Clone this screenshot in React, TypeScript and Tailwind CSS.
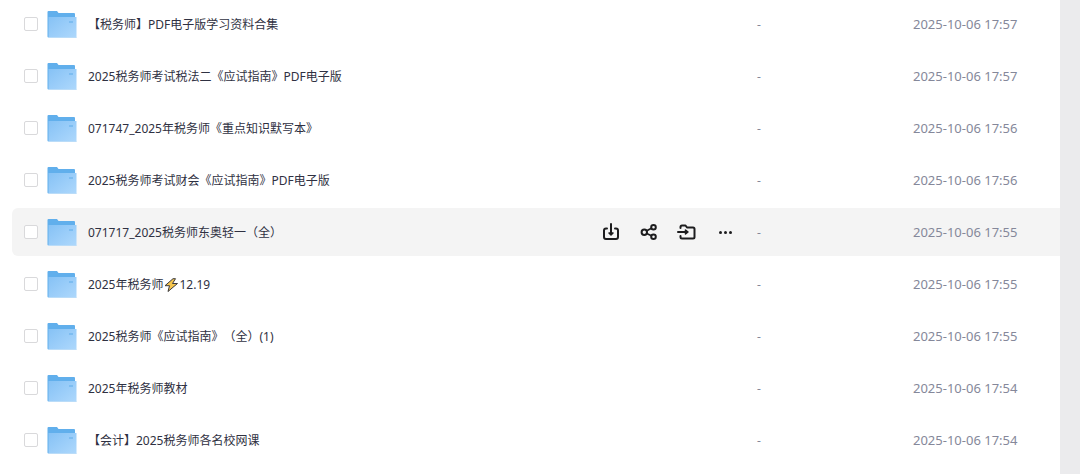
import { useState } from "react";

type Entry = { name: string; bolt?: string; time: string };

const entries: Entry[] = [
  { name: "【税务师】PDF电子版学习资料合集", time: "2025-10-06 17:57" },
  { name: "2025税务师考试税法二《应试指南》PDF电子版", time: "2025-10-06 17:57" },
  { name: "071747_2025年税务师《重点知识默写本》", time: "2025-10-06 17:56" },
  { name: "2025税务师考试财会《应试指南》PDF电子版", time: "2025-10-06 17:56" },
  { name: "071717_2025税务师东奥轻一（全）", time: "2025-10-06 17:55" },
  { name: "2025年税务师", bolt: "12.19", time: "2025-10-06 17:55" },
  { name: "2025税务师《应试指南》（全）(1)", time: "2025-10-06 17:55" },
  { name: "2025年税务师教材", time: "2025-10-06 17:54" },
  { name: "【会计】2025税务师各名校网课", time: "2025-10-06 17:54" },
];

function Folder() {
  return (
    <svg className="ml-2 h-8 w-8 shrink-0" viewBox="0 0 32 32" aria-hidden="true">
      <defs>
        <linearGradient id="front" x1="0" y1="0" x2="1" y2="1">
          <stop offset="0" stopColor="#86c2f5" />
          <stop offset="0.5" stopColor="#9acdf9" />
          <stop offset="1" stopColor="#aed8fc" />
        </linearGradient>
      </defs>
      <path d="M1.500 4a1 1 0 0 1 1-1H11l1.500 2H28a1 1 0 0 1 1 1v23.500H2.500a1 1 0 0 1-1-1z" fill="#61afec" />
      <path d="M2.500 9H30.500V29a1 1 0 0 1-1 1H3a.5.5 0 0 1-.5-.5z" fill="url(#front)" />
      <path d="M2 29H30.500v1H2z" fill="#badcf8" />
      <path d="M23 13h4v2h-4z" fill="#7dbdf1" />
    </svg>
  );
}

function Bolt() {
  return (
    <svg className="inline-block h-4 w-4 align-[-4px]" viewBox="0 0 16 16" role="img" aria-label="⚡">
      <path
        d="M10 1.700 2 8.700H6.500L5 14.500 14.500 6.500H9.500L12.500 1.700z"
        fill="#f6c64f"
        stroke="#3b3a3c"
        strokeLinejoin="round"
      />
    </svg>
  );
}

const iconProps = {
  className: "h-5 w-5",
  viewBox: "0 0 20 20",
  fill: "none",
  stroke: "#1c1c1e",
  strokeWidth: 2,
  strokeLinecap: "round" as const,
  strokeLinejoin: "round" as const,
};

function Actions() {
  return (
    <div className="flex gap-[18px]">
      <button aria-label="下载">
        <svg {...iconProps}>
          <path d="M6 6.500H5a2 2 0 0 0-2 2V15a2 2 0 0 0 2 2h10a2 2 0 0 0 2-2V8.500a2 2 0 0 0-2-2h-1M10 2v10" />
          <path d="M8 11h4l-2 2z" fill="#1c1c1e" strokeWidth="1.5" />
        </svg>
      </button>
      <button aria-label="分享">
        <svg {...iconProps}>
          <circle cx="5.300" cy="10.300" r="2.700" />
          <circle cx="14.500" cy="5.300" r="2.300" />
          <circle cx="14.500" cy="14.800" r="2.300" />
          <path d="M7.800 8.800 12.400 6.200M7.800 11.600l4.600 2.200" strokeWidth="1.700" />
        </svg>
      </button>
      <button aria-label="移动">
        <svg {...iconProps}>
          <path d="M3.500 6V5A1.500 1.500 0 0 1 5 3.500H8.500L10 5.500h6A1.500 1.500 0 0 1 17.500 7v8a1.500 1.500 0 0 1-1.500 1.500H5A1.500 1.500 0 0 1 3.500 15v-1M1 10h9" />
          <path d="M8.500 8v4l2.500-2z" fill="#1c1c1e" strokeWidth="1.5" />
        </svg>
      </button>
      <button aria-label="更多">
        <svg {...iconProps} fill="#1c1c1e" stroke="none">
          <circle cx="5.500" cy="10.500" r="1.500" />
          <circle cx="10.500" cy="10.500" r="1.500" />
          <circle cx="15.500" cy="10.500" r="1.500" />
        </svg>
      </button>
    </div>
  );
}

export default function App() {
  const [checked, setChecked] = useState<number[]>([]);
  const toggle = (i: number) =>
    setChecked((c) => (c.includes(i) ? c.filter((n) => n !== i) : [...c, i]));

  return (
    <div className="flex min-h-screen bg-[#ebebed] pr-5 font-['Noto_Sans','Noto_Sans_CJK_SC',sans-serif] [text-spacing-trim:space-all]">
      <ul className="flex flex-1 flex-col gap-1 bg-white pl-3">
        {entries.map((e, i) => (
          <li
            key={e.name}
            className={`flex h-12 items-center rounded-l-md pl-3 ${i === 4 ? "bg-[#f4f4f4]" : ""}`}
          >
            <input
              id={`entry-${i}`}
              type="checkbox"
              checked={checked.includes(i)}
              onChange={() => toggle(i)}
              className="h-[14px] w-[14px] shrink-0 appearance-none rounded-[2px] border border-[#d9d9db] bg-white checked:bg-[#5eaeee]"
            />
            <Folder />
            <label htmlFor={`entry-${i}`} className="ml-2.5 flex-1 pt-0.5 text-xs whitespace-nowrap text-[#2f3142]">
              {e.name}
              {e.bolt && (
                <>
                  <Bolt />
                  {e.bolt}
                </>
              )}
            </label>
            {i === 4 && <Actions />}
            <span className="ml-[22px] w-39 pt-0.5 text-xs text-[#85889a]">-</span>
            <time className="w-[147px] pt-0.5 text-[13px] whitespace-nowrap text-[#85889a]">{e.time}</time>
          </li>
        ))}
      </ul>
    </div>
  );
}
